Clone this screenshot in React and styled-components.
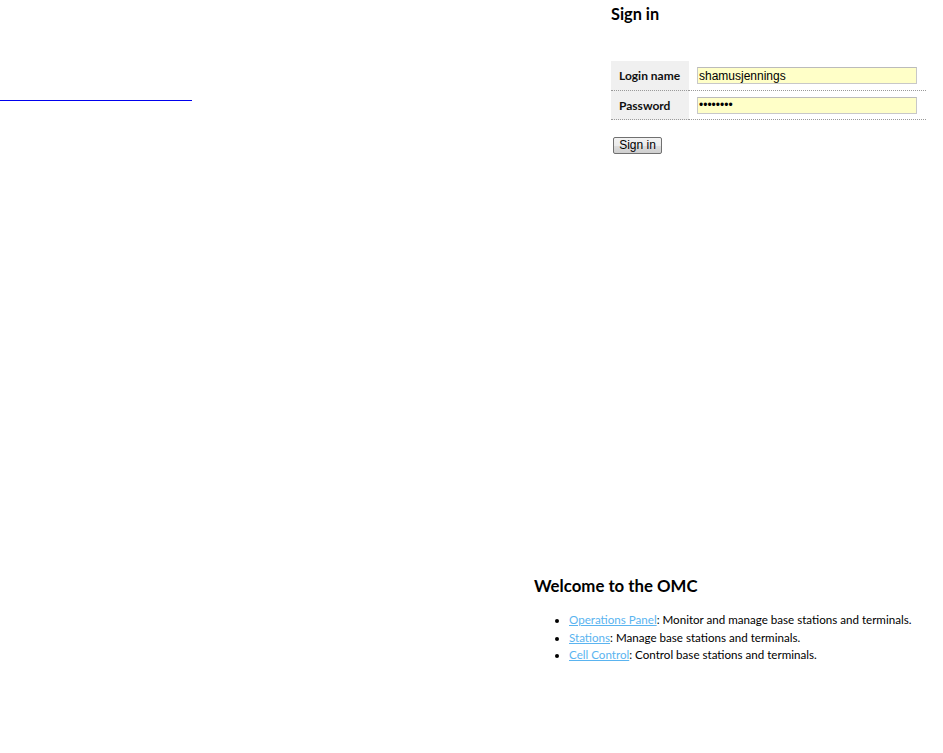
import React from "react";
import styled, { createGlobalStyle } from "styled-components";

const Global = createGlobalStyle`
  html, body { margin: 0; padding: 0; background: #fff; }
  body { font-family: Lato, "Open Sans", sans-serif; color: #000; }
`;

const Page = styled.div`
  width: 943px;
  height: 753px;
  display: flex;
  flex-direction: column;
`;

const Top = styled.div`
  display: flex;
  height: 540px;
`;

const LeftCol = styled.div`
  width: 611px;
  padding-top: 86px;
  box-sizing: border-box;
`;

const EmptyLink = styled.a`
  display: block;
  width: 192px;
  height: 14px;
  border-bottom: 1px solid #0000ee;
`;

const SideCol = styled.div`
  width: 315px;
  display: flex;
  flex-direction: column;
`;

const SideTitle = styled.h2`
  margin: 0;
  padding-top: 4px;
  font-size: 16.3px;
  font-weight: 700;
  line-height: 20px;
`;

const FormTable = styled.div`
  margin-top: 37px;
  display: grid;
  grid-template-columns: 78px 1fr;
`;

const Label = styled.div`
  background: #f0f0f0;
  font-size: 12px;
  font-weight: 700;
  height: ${(p) => p.$h}px;
  display: flex;
  align-items: center;
  padding-left: 8px;
  border-bottom: 1px dotted #999;
  color: #111;
`;

const Cell = styled.div`
  height: ${(p) => p.$h}px;
  display: flex;
  align-items: center;
  padding-left: 8px;
  padding-right: 9px;
  border-bottom: 1px dotted #999;
`;

const Field = styled.input`
  width: 100%;
  height: 17px;
  box-sizing: border-box;
  background: #ffffc8;
  border: 1px solid #c8c8c8;
  border-top-color: #bbb;
  font-family: "Liberation Sans", Arial, sans-serif;
  font-size: 12px;
  padding: 0 1px;
  margin: 0;
  outline: none;
  color: #000;
`;

const SubmitRow = styled.div`
  margin-top: 13px;
  padding-left: 2px;
`;

const Button = styled.button`
  width: 49px;
  height: 17px;
  padding: 0;
  border: 1px solid #707070;
  border-radius: 2px;
  background: linear-gradient(#f2f2f2 0%, #ebebeb 50%, #dddddd 51%, #cfcfcf 100%);
  font-family: "Liberation Sans", Arial, sans-serif;
  font-size: 12px;
  color: #000;
  line-height: 15px;
`;

const Welcome = styled.section`
  padding-left: 534px;
  padding-top: 36px;
`;

const WelcomeTitle = styled.h1`
  margin: 0;
  font-size: 16.8px;
  font-weight: 700;
  line-height: 20px;
`;

const List = styled.ul`
  margin: 15px 0 0;
  padding-left: 35px;
  font-size: 11.6px;
  line-height: 17.5px;
  li::marker { font-size: 11px; }
`;

const Link = styled.a`
  color: #5ab4f0;
  text-decoration: underline;
`;

export default function App() {
  return (
    <Page>
      <Global />
      <Top>
        <LeftCol>
          <EmptyLink href="#" aria-label="link" />
        </LeftCol>
        <SideCol>
          <SideTitle>Sign in</SideTitle>
          <FormTable>
            <Label $h={29}>Login name</Label>
            <Cell $h={29}>
              <Field type="text" defaultValue="shamusjennings" />
            </Cell>
            <Label $h={28}>Password</Label>
            <Cell $h={28}>
              <Field type="password" defaultValue="password" />
            </Cell>
          </FormTable>
          <SubmitRow>
            <Button>Sign in</Button>
          </SubmitRow>
        </SideCol>
      </Top>
      <Welcome>
        <WelcomeTitle>Welcome to the OMC</WelcomeTitle>
        <List>
          <li>
            <Link href="#">Operations Panel</Link>: Monitor and manage base stations and terminals.
          </li>
          <li>
            <Link href="#">Stations</Link>: Manage base stations and terminals.
          </li>
          <li>
            <Link href="#">Cell Control</Link>: Control base stations and terminals.
          </li>
        </List>
      </Welcome>
    </Page>
  );
}
